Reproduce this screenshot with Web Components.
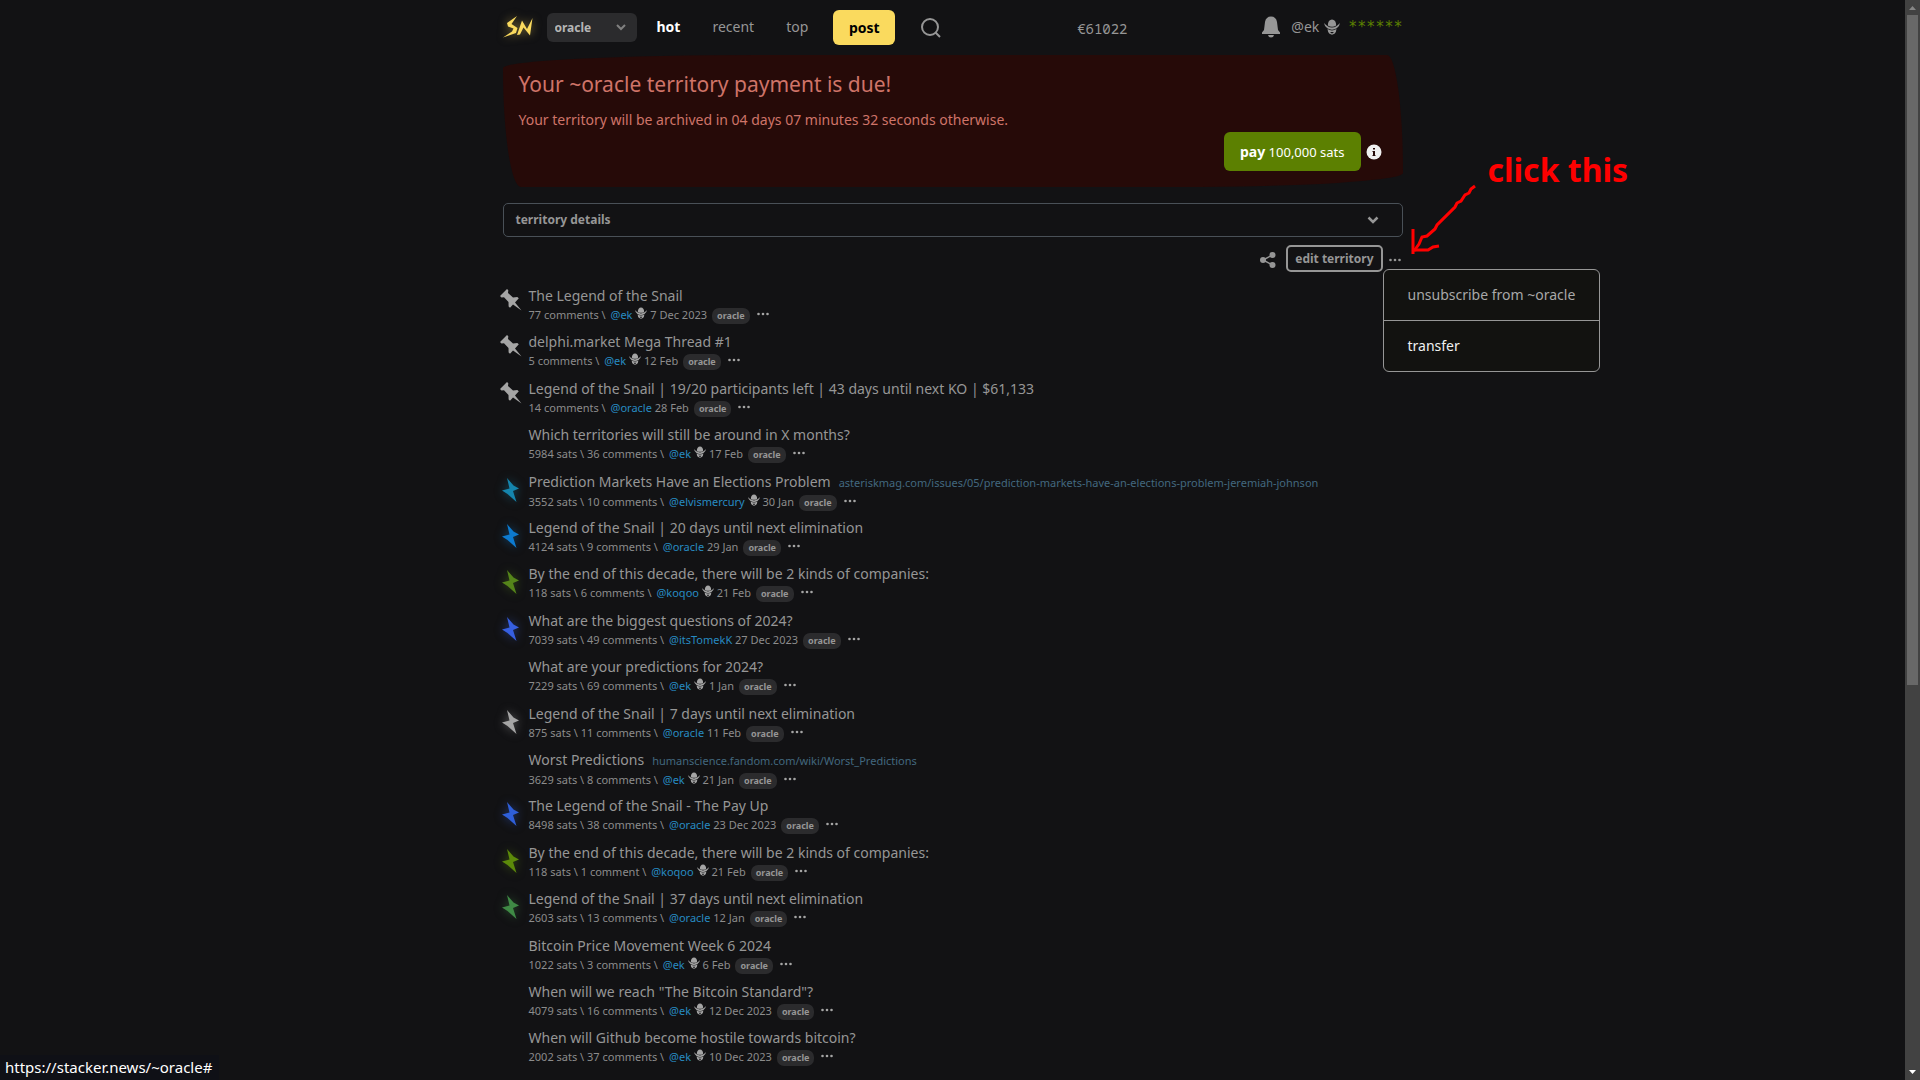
<!DOCTYPE html>
<html lang="en">
<head>
<meta charset="utf-8">
<title>oracle territory</title>
<style>
html, body {
    margin: 0;
    height: 100%;
    background-color: #121214;
}
body {
    --grey: #969696;
    --pill: #2b2b2d;
    font-family: "Noto Sans", "Liberation Sans", sans-serif;
    color: var(--grey);
    overflow: hidden;
}
</style>
</head>
<body>
<territory-page></territory-page>
<status-link>https://stacker.news/~oracle#</status-link>
<page-scrollbar></page-scrollbar>

<script>
const ICONS = {
    bolt: `<svg width="18" height="25" viewBox="0 0 18 25"><path fill="currentColor" d="M5 0 11.500 7.500 17 10.500 11 13 14.500 24 5.500 16 0 12.500 7.500 10.500Z"/></svg>`,
    pin: `<svg width="22" height="22" viewBox="0 0 22 22"><path fill="currentColor" d="M7 0 8.300 1.300 8 4 13 8.500 17.300 8 18.800 9.300 15 13.500 21.500 21.500 13 15.500 10 18.700 8.600 17.500 8.500 13 4 8.200 1.500 8.500 0 7Z"/></svg>`,
    hat: `<svg viewBox="0 0 16 16"><g fill="currentColor"><path d="M3.800 6.500C3.800 2.500 5.500 .5 8 .5S12.200 2.500 12.200 6.500Q8 9 3.800 6.500Z"/><path d="M0 4Q1.500 5.500 3.300 7Q8 10 12.700 7Q14.500 5.500 16 4Q15.500 7.500 12.700 9.300Q8 12 3.300 9.300Q.5 7.500 0 4Z"/><path fill-rule="evenodd" d="M3.500 10Q8 12.800 12.500 10Q12.300 13 10.500 14.700L8 15.800 5.500 14.700Q3.700 13 3.500 10ZM6.300 13H9.700L9 14.300H7Z"/></g></svg>`,
    dots: `<svg width="12" height="4" viewBox="0 0 12 4"><g fill="currentColor"><circle cx="1.500" cy="2" r="1.300"/><circle cx="6" cy="2" r="1.300"/><circle cx="10.500" cy="2" r="1.300"/></g></svg>`,
    chevron: `<svg width="10" height="7" viewBox="0 0 10 7"><path d="M1 1 5 5 9 1" fill="none" stroke="currentColor" stroke-width="2"/></svg>`
};

// [icon, colour, title, domain, sats, comments, user, hat, date]
const ITEMS = [
    ["pin", "#a5a5a5", "The Legend of the Snail", "", "", "77 comments", "ek", true, "7 Dec 2023"],
    ["pin", "#a5a5a5", "delphi.market Mega Thread #1", "", "", "5 comments", "ek", true, "12 Feb"],
    ["pin", "#a5a5a5", "Legend of the Snail | 19/20 participants left | 43 days until next KO | $61,133", "", "", "14 comments", "oracle", false, "28 Feb"],
    ["", "", "Which territories will still be around in X months?", "", "5984 sats", "36 comments", "ek", true, "17 Feb"],
    ["bolt", "#1585ad", "Prediction Markets Have an Elections Problem", "asteriskmag.com/issues/05/prediction-markets-have-an-elections-problem-jeremiah-johnson", "3552 sats", "10 comments", "elvismercury", true, "30 Jan"],
    ["bolt", "#0d7bd0", "Legend of the Snail | 20 days until next elimination", "", "4124 sats", "9 comments", "oracle", false, "29 Jan"],
    ["bolt", "#55851a", "By the end of this decade, there will be 2 kinds of companies:", "", "118 sats", "6 comments", "koqoo", true, "21 Feb"],
    ["bolt", "#365fe0", "What are the biggest questions of 2024?", "", "7039 sats", "49 comments", "itsTomekK", false, "27 Dec 2023"],
    ["", "", "What are your predictions for 2024?", "", "7229 sats", "69 comments", "ek", true, "1 Jan"],
    ["bolt", "#a5a5a5", "Legend of the Snail | 7 days until next elimination", "", "875 sats", "11 comments", "oracle", false, "11 Feb"],
    ["", "", "Worst Predictions", "humanscience.fandom.com/wiki/Worst_Predictions", "3629 sats", "8 comments", "ek", true, "21 Jan"],
    ["bolt", "#2f5fd8", "The Legend of the Snail - The Pay Up", "", "8498 sats", "38 comments", "oracle", false, "23 Dec 2023"],
    ["bolt", "#5c8a0a", "By the end of this decade, there will be 2 kinds of companies:", "", "118 sats", "1 comment", "koqoo", true, "21 Feb"],
    ["bolt", "#3f8a45", "Legend of the Snail | 37 days until next elimination", "", "2603 sats", "13 comments", "oracle", false, "12 Jan"],
    ["", "", "Bitcoin Price Movement Week 6 2024", "", "1022 sats", "3 comments", "ek", true, "6 Feb"],
    ["", "", "When will we reach \"The Bitcoin Standard\"?", "", "4079 sats", "16 comments", "ek", true, "12 Dec 2023"],
    ["", "", "When will Github become hostile towards bitcoin?", "", "2002 sats", "37 comments", "ek", true, "10 Dec 2023"]
];

class SiteHeader extends HTMLElement {
    constructor() {
        super();
        this.attachShadow({mode: "open"});
    }
    connectedCallback() {
        this.shadowRoot.innerHTML = `
        <style>
        :host {
            display: flex;
            align-items: center;
            height: 55px;
            box-sizing: border-box;
        }
        a { color: inherit; text-decoration: none; }
        .logo {
            color: #fada5e;
            margin-right: 13px;
            height: 26px;
            filter: drop-shadow(0 0 5px #fada5e80);
        }
        .sub {
            display: grid;
            align-items: center;
            color: #b5b5b5;
        }
        .sub > * { grid-area: 1 / 1; }
        .sub svg { justify-self: end; margin-right: 11px; color: #808080; pointer-events: none; }
        select {
            appearance: none;
            width: 90px;
            height: 29px;
            padding: 0 8px;
            border: 0;
            border-radius: 6px;
            background-color: var(--pill);
            color: inherit;
            font: bold 12px/18px "Noto Sans", sans-serif;
        }
        nav {
            display: flex;
            align-items: center;
            gap: 32px;
            margin-left: 20px;
            font-size: 14px;
            line-height: 20px;
            padding-bottom: 2px;
        }
        nav .active { color: #fff; font-weight: bold; }
        .post {
            width: 62px;
            height: 35px;
            margin-left: 25px;
            border: 0;
            border-radius: 6px;
            background-color: #fada5e;
            color: #000;
            font: bold 14px/20px "Noto Sans", sans-serif;
        }
        .search {
            margin-left: 25px;
            padding: 0;
            border: 0;
            background: none;
            color: inherit;
            height: 22px;
        }
        .search svg { display: block; }
        .price { margin: 0 auto; padding-top: 2px; font: 14px/20px "Noto Sans Mono", "DejaVu Sans Mono", monospace; }
        .user { display: flex; align-items: center; font-size: 14px; line-height: 20px; padding-bottom: 2px; }
        .user .hat svg { width: 16px; height: 16px; display: block; margin: 0 8px 0 5px; }
        .bell { margin-right: 11px; height: 22px; }
        .sats { color: #5c8001; font: 15px/20px "DejaVu Sans Mono", monospace; }
        </style>
        <a class="logo" href="#" aria-label="home"><svg width="31" height="24" viewBox="1 0 29 24"><g fill="currentColor"><path d="M14 1 4 8 5 11.500 10.500 13.500 9 16.500 0 22.500 13 18 14.500 13 8.500 9Z"/><path d="M14 20 19 5.500 24 14 29.500 3 27 20.500 20.500 12.500 17 19.500Z"/></g></svg></a>
        <div class="sub"><select aria-label="territory"><option>oracle</option></select>${ICONS.chevron}</div>
        <nav><a class="active" href="#">hot</a><a href="#">recent</a><a href="#">top</a></nav>
        <button class="post">post</button>
        <button class="search" aria-label="search"><svg width="22" height="22" viewBox="0 0 22 22"><g fill="none" stroke="currentColor" stroke-width="2"><circle cx="10" cy="10" r="8"/><path d="M15.500 15.500 20 20"/></g></svg></button>
        <span class="price">€61022</span>
        <div class="user">
            <a class="bell" href="#" aria-label="notifications"><svg width="18" height="22" viewBox="0 0 18 22"><path fill="currentColor" d="M0 18V16.500L2 14 3 6Q4 .5 9 .5T15 6L16 14 18 16.500V18ZM6 19H12Q11.500 21.500 9 21.500T6 19Z"/></svg></a>
            <a href="#">@ek</a><span class="hat">${ICONS.hat}</span><a class="sats" href="#">******</a>
        </div>`;
    }
}
customElements.define("site-header", SiteHeader);

class PaymentAlert extends HTMLElement {
    constructor() {
        super();
        this.attachShadow({mode: "open"});
    }
    connectedCallback() {
        this.shadowRoot.innerHTML = `
        <style>
        :host {
            display: block;
            padding: 16px;
            background-color: #260a08;
            color: #cf7468;
            border-radius: 255px 16px 225px 18px / 13px 118px 14px 119px;
        }
        h4 { margin: 0 0 10px; font-size: 21px; line-height: 26px; font-weight: normal; }
        p { margin: 0; font-size: 14px; line-height: 25px; }
        .pay { display: flex; justify-content: flex-end; align-items: center; gap: 5px; padding-right: 5px; }
        button {
            height: 39px;
            padding: 0 16px;
            border: 0;
            border-radius: 6px;
            background-color: #5c8001;
            color: #fff;
            font: 13px/20px "Noto Sans", sans-serif;
        }
        b { font-size: 14px; }
        </style>
        <h4><slot name="title"></slot></h4>
        <p><slot></slot></p>
        <div class="pay">
            <button><b>pay</b> 100,000 sats</button>
            <svg width="16" height="16" viewBox="0 0 16 16"><circle cx="8" cy="8" r="7.500" fill="#f0f0f0"/><path fill="#260a08" d="M7 4H9V5.500H7ZM6.500 7H9V11H9.500V12H6.500V11H7V8H6.500Z"/></svg>
        </div>`;
    }
}
customElements.define("payment-alert", PaymentAlert);

class TerritoryDetails extends HTMLElement {
    constructor() {
        super();
        this.attachShadow({mode: "open"});
    }
    connectedCallback() {
        this.shadowRoot.innerHTML = `
        <style>
        :host { display: block; margin-top: 16px; }
        button {
            display: flex;
            justify-content: space-between;
            align-items: center;
            box-sizing: border-box;
            width: 100%;
            height: 34px;
            padding: 0 23px 0 12px;
            border: 1px solid #495057;
            border-radius: 5px;
            background: none;
            color: inherit;
            font: bold 12px/18px "Noto Sans", sans-serif;
        }
        </style>
        <button aria-expanded="false"><slot></slot><svg width="12" height="8" viewBox="0 0 12 8"><path d="M1.500 1.500 6 6 10.500 1.500" fill="none" stroke="currentColor" stroke-width="2.500"/></svg></button>`;
    }
}
customElements.define("territory-details", TerritoryDetails);

class ActionMenu extends HTMLElement {
    constructor() {
        super();
        this.attachShadow({mode: "open"});
    }
    connectedCallback() {
        this.shadowRoot.innerHTML = `
        <style>
        :host { display: block; position: relative; }
        .toggle { display: block; width: 20px; height: 27px; padding: 2px 0 0 6px; border: 0; background: none; color: inherit; }
        .toggle svg { display: block; }
        .menu {
            position: absolute;
            top: 24px;
            left: 0;
            border: 1px solid #969696;
            border-radius: 6px;
            background-color: #121210;
            overflow: hidden;
        }
        .menu a {
            display: block;
            padding: 0 24px;
            line-height: 50px;
            font-size: 14px;
            color: #a8a8a8;
            text-decoration: none;
            white-space: nowrap;
        }
        .menu a + a { border-top: 1px solid #969696; color: #f0f0f0; }
        </style>
        <button class="toggle" aria-label="more">${ICONS.dots}</button>
        <div class="menu"><a href="#">unsubscribe from ~oracle</a><a href="#">transfer</a></div>`;
    }
}
customElements.define("action-menu", ActionMenu);

class TerritoryActions extends HTMLElement {
    constructor() {
        super();
        this.attachShadow({mode: "open"});
    }
    connectedCallback() {
        this.shadowRoot.innerHTML = `
        <style>
        :host { display: flex; justify-content: flex-end; align-items: center; margin-top: 8px; }
        .share { padding: 2px 0 0; margin-right: 10px; border: 0; background: none; color: inherit; height: 18px; }
        .share svg { display: block; }
        .edit {
            height: 27px;
            padding: 0 7px;
            border: 2px solid #969696;
            border-radius: 5px;
            background: none;
            color: inherit;
            font: bold 12px/18px "Noto Sans", sans-serif;
        }
        </style>
        <button class="share" aria-label="share"><svg width="16" height="16" viewBox="0 0 16 16"><g fill="currentColor"><circle cx="3" cy="8" r="3"/><circle cx="12.500" cy="3" r="3"/><circle cx="12.500" cy="13" r="3"/><path d="M12.500 3 3 8 12.500 13" fill="none" stroke="currentColor" stroke-width="1.500"/></g></svg></button>
        <button class="edit">edit territory</button>
        <action-menu></action-menu>`;
    }
}
customElements.define("territory-actions", TerritoryActions);

class PostItem extends HTMLElement {
    constructor() {
        super();
        this.attachShadow({mode: "open"});
    }
    set item(item) {
        this._item = item;
        this.render();
    }
    render() {
        const [icon, color, title, domain, sats, comments, user, hat, date] = this._item;
        this.shadowRoot.innerHTML = `
        <style>
        :host { display: grid; grid-template-columns: 26px 1fr; white-space: nowrap; }
        a { text-decoration: none; color: inherit; }
        .icon { color: ${color || "inherit"}; }
        .icon svg { display: block; }
        .bolt { margin-left: -1px; padding-top: 7px; filter: drop-shadow(0 0 5px ${color}80); }
        .pin { margin-left: -3px; padding-top: 4px; }
        .title { display: flex; gap: 8px; align-items: baseline; font-size: 14px; line-height: 21px; }
        .title .domain { font-size: 11px; color: #42687f; }
        .meta { display: flex; align-items: center; font-size: 11px; line-height: 18px; color: #8c8c8c; }
        .text { white-space: pre; }
        .user { margin-left: 2px; color: #278bc2; }
        .hat svg { display: block; width: 12px; height: 12px; margin: 0 0 4px 3px; color: #a5a5a5; }
        .pill {
            height: 16px;
            line-height: 16px;
            margin: 2px 7px 0 5px;
            padding: 0 5px;
            border-radius: 7px;
            background-color: var(--pill);
            color: #969696;
            font-size: 9px;
            font-weight: bold;
        }
        button { height: 4px; padding: 0; margin-bottom: 2px; border: 0; background: none; color: #a5a5a5; display: flex; }
        </style>
        <span class="icon ${icon}">${ICONS[icon] || ""}</span>
        <div>
            <div class="title"><a href="#">${title}</a>${domain ? `<a class="domain" href="#">${domain}</a>` : ""}</div>
            <div class="meta">
                <span class="text">${sats ? sats + " \\ " : ""}<a href="#">${comments}</a> \\ <a class="user" href="#">@${user}</a></span>${hat ? `<span class="hat">${ICONS.hat}</span>` : ""}<span class="text"> ${date}</span>
                <a class="pill" href="#">oracle</a>
                <button aria-label="more">${ICONS.dots}</button>
            </div>
        </div>`;
    }
}
customElements.define("post-item", PostItem);

class PostList extends HTMLElement {
    constructor() {
        super();
        this.attachShadow({mode: "open"});
    }
    connectedCallback() {
        this.shadowRoot.innerHTML = `
        <style>
        :host { display: grid; grid-auto-rows: 46px 47px 46px 47px 46px; margin-top: 13px; }
        </style>`;
        ITEMS.forEach(item => {
            const post = document.createElement("post-item");
            post.item = item;
            this.shadowRoot.appendChild(post);
        });
    }
}
customElements.define("post-list", PostList);

class ClickNote extends HTMLElement {
    constructor() {
        super();
        this.attachShadow({mode: "open"});
    }
    connectedCallback() {
        this.shadowRoot.innerHTML = `
        <style>
        :host { display: block; position: absolute; left: 100%; top: 146px; color: #f00; white-space: nowrap; pointer-events: none; }
        span { display: block; padding-left: 85px; font-size: 32px; line-height: 48px; font-weight: bold; }
        svg { position: absolute; left: 0; top: 0; }
        </style>
        <span><slot></slot></span>
        <svg width="80" height="120" viewBox="0 0 80 120"><g fill="none" stroke="currentColor" stroke-width="3"><path d="M72 40 68 43 66 47 62 49 58 55 54 57 52 61 34 79 32 83 24 90 19 91 16 98 11 105"/><path d="M10 83V108M11 104H25L30 101 36 100"/></g></svg>`;
    }
}
customElements.define("click-note", ClickNote);

class TerritoryPage extends HTMLElement {
    constructor() {
        super();
        this.attachShadow({mode: "open"});
    }
    connectedCallback() {
        this.shadowRoot.innerHTML = `
        <style>
        :host { display: block; height: 100vh; overflow: hidden; padding-right: 15px; }
        main { position: relative; max-width: 900px; margin: 0 auto; }
        </style>
        <main>
            <site-header></site-header>
            <payment-alert>
                <span slot="title">Your ~oracle territory payment is due!</span>
                Your territory will be archived in 04 days 07 minutes 32 seconds otherwise.
            </payment-alert>
            <territory-details>territory details</territory-details>
            <territory-actions></territory-actions>
            <post-list></post-list>
            <click-note>click this</click-note>
        </main>`;
    }
}
customElements.define("territory-page", TerritoryPage);

class StatusLink extends HTMLElement {
    constructor() {
        super();
        this.attachShadow({mode: "open"});
    }
    connectedCallback() {
        this.shadowRoot.innerHTML = `
        <style>
        :host {
            position: fixed;
            left: 0;
            bottom: 0;
            padding: 0 7px 0 5px;
            background-color: #0f1016;
            color: #fff;
            font-size: 15px;
            line-height: 25px;
        }
        </style>
        <slot></slot>`;
    }
}
customElements.define("status-link", StatusLink);

class PageScrollbar extends HTMLElement {
    constructor() {
        super();
        this.attachShadow({mode: "open"});
    }
    connectedCallback() {
        this.shadowRoot.innerHTML = `
        <style>
        :host {
            position: fixed;
            top: 0;
            right: 0;
            bottom: 0;
            width: 15px;
            display: flex;
            flex-direction: column;
            align-items: center;
            background-color: #424242;
        }
        .thumb { width: 11px; height: 62%; background-color: #686868; }
        svg { flex: none; display: block; }
        .down { margin-top: auto; }
        </style>
        <svg width="15" height="15" viewBox="0 0 15 15"><path fill="#868686" d="M4 10 7.500 6 11 10Z"/></svg>
        <div class="thumb"></div>
        <svg class="down" width="15" height="15" viewBox="0 0 15 15"><path fill="#fff" d="M4 5 7.500 9 11 5Z"/></svg>`;
    }
}
customElements.define("page-scrollbar", PageScrollbar);
</script>
</body>
</html>
